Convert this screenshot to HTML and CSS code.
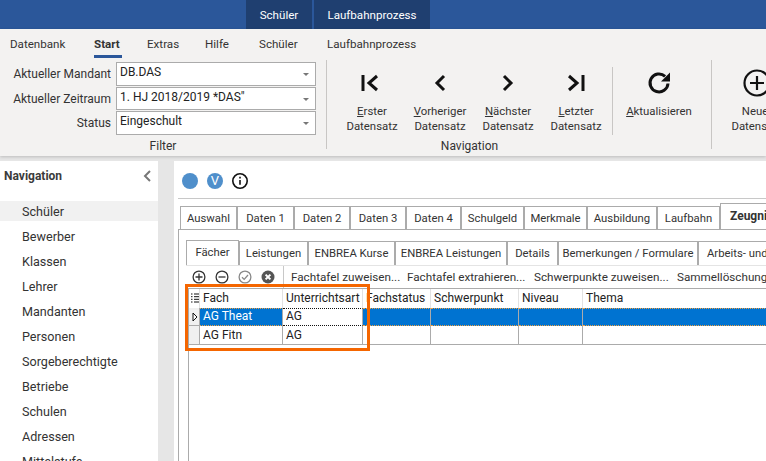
FILE: index.html
```html
<!DOCTYPE html>
<html lang="de">
<head>
    <meta charset="UTF-8">
    <meta name="viewport" content="width=device-width, initial-scale=1.0">
    <title>Schüler</title>
    <link rel="stylesheet" href="styles.css">
</head>
<body>
    <div class="titlebar">
        <div class="title-tab title-tab-first">Schüler</div>
        <div class="title-tab title-tab-second">Laufbahnprozess</div>
    </div>

    <div class="ribbon">
        <div class="menu">
            <span>Datenbank</span>
            <span class="menu-active">Start</span>
            <span>Extras</span>
            <span>Hilfe</span>
            <span>Schüler</span>
            <span>Laufbahnprozess</span>
        </div>
        <div class="ribbon-body">
            <div class="group group-filter">
                <div class="filter-form">
                    <label>Aktueller Mandant</label>
                    <div class="combo">DB.DAS</div>
                    <label>Aktueller Zeitraum</label>
                    <div class="combo">1. HJ 2018/2019 *DAS"</div>
                    <label>Status</label>
                    <div class="combo">Eingeschult</div>
                </div>
                <div class="group-title">Filter</div>
            </div>
            <div class="group group-nav">
                <div class="buttons">
                    <div class="rb">
                        <svg viewBox="0 0 24 24" class="rb-icon"><path d="M3 4v16" class="st"/><path d="M17 5l-8 7 8 7" class="st"/></svg>
                        <span><u>E</u>rster<br>Datensatz</span>
                    </div>
                    <div class="rb">
                        <svg viewBox="0 0 24 24" class="rb-icon"><path d="M16 5l-7 7 7 7" class="st"/></svg>
                        <span><u>V</u>orheriger<br>Datensatz</span>
                    </div>
                    <div class="rb">
                        <svg viewBox="0 0 24 24" class="rb-icon"><path d="M8 5l7 7-7 7" class="st"/></svg>
                        <span><u>N</u>ächster<br>Datensatz</span>
                    </div>
                    <div class="rb">
                        <svg viewBox="0 0 24 24" class="rb-icon"><path d="M5 5l8 7-8 7" class="st"/><path d="M19 4v16" class="st"/></svg>
                        <span><u>L</u>etzter<br>Datensatz</span>
                    </div>
                </div>
                <div class="group-title">Navigation</div>
            </div>
            <div class="group group-refresh">
                <div class="rb">
                    <svg viewBox="0 0 24 24" class="rb-icon"><path d="M21 12.5a9 9 0 1 1-2.9-7.2" class="st"/><path d="M23 1.5v9h-9z" class="fill"/></svg>
                    <span><u>A</u>ktualisieren</span>
                </div>
            </div>
            <div class="group group-new">
                <div class="rb">
                    <svg viewBox="0 0 28 28" class="rb-icon rb-icon-new"><circle cx="14" cy="14" r="12.5" class="st"/><path d="M14 7v14M7 14h14" class="st"/></svg>
                    <span>Neuer<br>Datensatz</span>
                </div>
            </div>
        </div>
    </div>

    <div class="workspace">
        <aside class="sidebar">
            <div class="sidebar-head">
                <span>Navigation</span>
                <svg viewBox="0 0 10 12" class="collapse"><path d="M8 1L3 6l5 5"/></svg>
            </div>
            <ul class="nav-list">
                <li class="nav-active">Schüler</li>
                <li>Bewerber</li>
                <li>Klassen</li>
                <li>Lehrer</li>
                <li>Mandanten</li>
                <li>Personen</li>
                <li>Sorgeberechtigte</li>
                <li>Betriebe</li>
                <li>Schulen</li>
                <li>Adressen</li>
                <li>Mittelstufe</li>
            </ul>
        </aside>

        <main class="content">
            <div class="status-row">
                <span class="dot"></span>
                <span class="dot dot-v">V</span>
                <svg viewBox="0 0 16 16" class="info"><circle cx="8" cy="8" r="7.2"/><path d="M8 7v4.8M8 3.8v1.8"/></svg>
            </div>

            <div class="tabs tabs-outer">
                <div class="tab">Auswahl</div>
                <div class="tab">Daten 1</div>
                <div class="tab">Daten 2</div>
                <div class="tab">Daten 3</div>
                <div class="tab">Daten 4</div>
                <div class="tab">Schulgeld</div>
                <div class="tab">Merkmale</div>
                <div class="tab">Ausbildung</div>
                <div class="tab">Laufbahn</div>
                <div class="tab tab-active tab-bold">Zeugnisse</div>
            </div>

            <div class="panel">
                <div class="tabs tabs-inner">
                    <div class="tab tab-active">Fächer</div>
                    <div class="tab">Leistungen</div>
                    <div class="tab">ENBREA Kurse</div>
                    <div class="tab">ENBREA Leistungen</div>
                    <div class="tab">Details</div>
                    <div class="tab">Bemerkungen / Formulare</div>
                    <div class="tab tab-cut">Arbeits- und Sozialverhalten</div>
                </div>

                <div class="subpanel">
                    <div class="toolbar">
                        <svg viewBox="0 0 14 14" class="tool"><circle cx="7" cy="7" r="5.9"/><path d="M7 3.5v7M3.5 7h7"/></svg>
                        <svg viewBox="0 0 14 14" class="tool"><circle cx="7" cy="7" r="5.9"/><path d="M3.5 7h7"/></svg>
                        <svg viewBox="0 0 14 14" class="tool tool-off"><circle cx="7" cy="7" r="5.9"/><path d="M4 7.2l2.2 2.2L10 5"/></svg>
                        <svg viewBox="0 0 14 14" class="tool tool-cancel"><circle cx="7" cy="7" r="6.5"/><path d="M4.6 4.6l4.8 4.8M9.4 4.6l-4.8 4.8"/></svg>
                        <div class="tool-links">
                            <span>Fachtafel zuweisen...</span>
                            <span>Fachtafel extrahieren...</span>
                            <span>Schwerpunkte zuweisen...</span>
                            <span>Sammellöschung</span>
                        </div>
                    </div>

                    <div class="datagrid">
                        <div class="cell head head-icon">
                            <svg viewBox="0 0 8 10" class="list-icon"><path d="M0 1h1.5M3 1h5M0 3.7h1.5M3 3.7h5M0 6.3h1.5M3 6.3h5M0 9h1.5M3 9h5"/></svg>
                        </div>
                        <div class="cell head">Fach</div>
                        <div class="cell head">Unterrichtsart</div>
                        <div class="cell head">Fachstatus</div>
                        <div class="cell head">Schwerpunkt</div>
                        <div class="cell head">Niveau</div>
                        <div class="cell head">Thema</div>

                        <div class="cell indicator">
                            <svg viewBox="0 0 6 10" class="pointer"><path d="M1 1l4 4-4 4z"/></svg>
                        </div>
                        <div class="cell sel sel-first">AG Theat</div>
                        <div class="cell current">AG</div>
                        <div class="cell sel"></div>
                        <div class="cell sel"></div>
                        <div class="cell sel"></div>
                        <div class="cell sel"></div>

                        <div class="cell indicator"></div>
                        <div class="cell">AG Fitn</div>
                        <div class="cell">AG</div>
                        <div class="cell"></div>
                        <div class="cell"></div>
                        <div class="cell"></div>
                        <div class="cell"></div>
                    </div>
                </div>
            </div>
        </main>
    </div>

    <div class="callout"></div>
</body>
</html>
```

FILE: styles.css
```css
* {
    box-sizing: border-box;
}
html, body {
    height: 100%;
}
body {
    margin: 0;
    width: 766px;
    height: 461px;
    overflow: hidden;
    position: relative;
    font-family: Roboto, "Noto Sans", sans-serif;
    font-size: 12px;
    color: #333;
    background-color: #e6e6e6;
}

/* title bar */
.titlebar {
    height: 29px;
    display: flex;
    padding-left: 246px;
    background-color: #2b579a;
}
.title-tab {
    display: flex;
    align-items: center;
    justify-content: center;
    font-size: 11.6px;
    color: #fff;
    background-color: #1f3f70;
}
.title-tab-first {
    width: 66px;
    margin-right: 2px;
}
.title-tab-second {
    width: 116px;
}

/* ribbon */
.ribbon {
    height: 127px;
    background-color: #f3f2f1;
    box-shadow: 0 1px 3px rgba(0, 0, 0, 0.18);
    position: relative;
}
.menu {
    height: 31px;
    display: grid;
    grid-template-columns: 84px 53px 58px 54px 68px 100px;
    padding-left: 10px;
    align-items: start;
    font-size: 11.6px;
    line-height: 31px;
}
.menu-active {
    font-weight: 700;
    width: 28px;
    height: 29px;
    border-bottom: 3px solid #2b579a;
}
.ribbon-body {
    display: flex;
    height: 96px;
    overflow: hidden;
}
.group {
    flex: none;
    position: relative;
    height: 89px;
    border-right: 1px solid #c8c6c4;
}
.group-filter {
    width: 327px;
    padding-left: 2px;
}
.filter-form {
    display: grid;
    grid-template-columns: 109px 200px;
    grid-template-rows: 24px 23px 24px;
    gap: 1px 5px;
    padding-top: 2px;
}
.filter-form label {
    text-align: right;
    line-height: 24px;
}
.combo {
    position: relative;
    padding-left: 3px;
    line-height: 19px;
    color: #222;
    background-color: #fff;
    border: 1px solid #ababab;
}
.combo::after {
    content: "";
    position: absolute;
    right: 6px;
    top: 10px;
    border-left: 3px solid transparent;
    border-right: 3px solid transparent;
    border-top: 3px solid #777;
}
.group-title {
    position: absolute;
    left: 0;
    right: 0;
    top: 76px;
    text-align: center;
    line-height: 20px;
}
.group-nav {
    width: 286px;
    height: 68px;
    margin-top: 7px;
}
.group-nav .group-title {
    top: 69px;
}
.buttons {
    display: grid;
    grid-template-columns: 68px 68px 68px 68px;
    padding-left: 11px;
}
.rb {
    display: flex;
    flex-direction: column;
    align-items: center;
    text-align: center;
    font-size: 11.4px;
    line-height: 15px;
    white-space: nowrap;
}
.rb-icon {
    width: 24px;
    height: 24px;
    margin: 4px 0 9px;
}
.st {
    fill: none;
    stroke: #111;
    stroke-width: 3;
}
.fill {
    fill: #111;
}
.group-refresh {
    width: 99px;
    padding: 7px 6px 0 0;
}
.group-new {
    width: 90px;
    padding-top: 7px;
    border-right: none;
}
.rb-icon-new {
    width: 28px;
    height: 28px;
    margin: 2px 0 7px;
}
.rb-icon-new .st {
    stroke-width: 2.2;
}

/* lower part */
.workspace {
    display: flex;
    height: 305px;
    margin-top: 5px;
}
.sidebar {
    width: 158px;
    margin-right: 16px;
    background-color: #fff;
    overflow: hidden;
}
.sidebar-head {
    display: flex;
    justify-content: space-between;
    align-items: center;
    height: 29px;
    padding: 0 6px 0 4px;
    font-weight: 700;
    color: #3b3b3b;
}
.collapse {
    width: 10px;
    height: 12px;
    fill: none;
    stroke: #777;
    stroke-width: 2;
}
.nav-list {
    list-style: none;
    margin: 11px 0 0;
    padding: 0;
}
.nav-list li {
    height: 25px;
    padding: 1px 0 0 22px;
    line-height: 20px;
    font-size: 12.6px;
}
.nav-list .nav-active {
    height: 20px;
    margin-bottom: 5px;
    background-color: #f1f1f1;
}

.content {
    flex: 1;
    min-width: 0;
    overflow: hidden;
    background-color: #fff;
    padding-left: 4px;
}
.status-row {
    height: 38px;
    display: flex;
    align-items: center;
    gap: 9px;
    padding: 2px 0 0 4px;
    border-bottom: 1px solid #c8c8c8;
}
.dot {
    width: 16px;
    height: 16px;
    border-radius: 50%;
    background-color: #4f8fcb;
    color: #fff;
    font-size: 13px;
    line-height: 16px;
    text-align: center;
}
.info {
    width: 16px;
    height: 16px;
    fill: none;
    stroke: #111;
    stroke-width: 1.6;
}

/* tabs */
.tabs {
    display: grid;
    align-items: end;
    white-space: nowrap;
    font-size: 11.3px;
}
.tab {
    overflow: hidden;
    height: 23px;
    padding-top: 1px;
    line-height: 22px;
    text-align: center;
    border: 1px solid #ababab;
    border-bottom: none;
}
.tab-active {
    background-color: #fff;
}
.tab-bold {
    height: 26px;
    font-size: 12px;
    font-weight: 700;
    text-align: left;
    padding-left: 9px;
    border-right: none;
}
.tab-cut {
    text-align: left;
    padding-left: 8px;
    border-right: none;
}
.tabs-outer {
    height: 30px;
    padding-left: 2px;
    grid-template-columns: 57px 57px 56px 56px 55px 63px 63px 70px 63px 60px;
}
.panel {
    border-top: 1px solid #ababab;
    border-left: 1px solid #ababab;
    padding: 10px 0 0 7px;
}
.tabs-inner {
    height: 25px;
    grid-template-columns: 53px 69px 87px 112px 51px 140px 110px;
}
.tabs-inner .tab-active {
    height: 25px;
    padding-top: 0;
    line-height: 24px;
}
.tabs-inner .tab:not(.tab-active) {
    height: 24px;
}
.subpanel {
    border-top: 1px solid #e4e4e4;
    height: 200px;
}
.toolbar {
    display: flex;
    align-items: center;
    height: 22px;
    gap: 9px;
    padding-left: 6px;
    white-space: nowrap;
    font-size: 11.7px;
}
.tool {
    flex: none;
    width: 14px;
    height: 14px;
    fill: none;
    stroke: #333;
    stroke-width: 1.3;
}
.tool-off {
    stroke: #888;
}
.tool-cancel circle {
    fill: #555;
    stroke: none;
}
.tool-cancel path {
    stroke: #fff;
    stroke-width: 2;
}
.tool-links {
    display: grid;
    grid-template-columns: 116px 127px 143px 100px;
    margin-left: -1px;
    padding-left: 7px;
    line-height: 22px;
    border-left: 1px solid #c8c8c8;
}

/* data grid */
.datagrid {
    display: grid;
    height: 178px;
    margin-left: 2px;
    grid-template-columns: 11px 83px 80px 68px 88px 64px 200px;
    grid-template-rows: 19px 18px 19px;
    align-content: start;
    border-top: 1px solid #ababab;
    border-left: 1px solid #ababab;
}
.cell {
    padding-left: 3px;
    line-height: 18px;
    color: #222;
    overflow: hidden;
    border-right: 1px solid #ababab;
    border-bottom: 1px solid #ababab;
}
.head {
    border-right-color: #e2e2e2;
    border-bottom: none;
}
.head-icon {
    padding: 4px 0 0 2px;
}
.list-icon {
    display: block;
    width: 8px;
    height: 10px;
    fill: none;
    stroke: #111;
    stroke-width: 1;
}
.indicator {
    padding: 4px 0 0 3px;
    background-color: #f0f0f0;
}
.pointer {
    display: block;
    width: 6px;
    height: 10px;
    fill: #fff;
    stroke: #111;
    stroke-width: 1;
}
.sel {
    background-color: #0073d1;
    color: #fff;
    border-bottom: 1px dotted #f0a040;
    border-top: 1px dotted #f0a040;
    line-height: 15px;
}
.current {
    line-height: 15px;
    border-top: 1px dotted #111;
    border-bottom: 1px dotted #111;
}

/* orange marker drawn over the grid */
.callout {
    position: absolute;
    left: 185px;
    top: 284px;
    width: 185px;
    height: 67px;
    border: 3px solid #f56600;
}
```
